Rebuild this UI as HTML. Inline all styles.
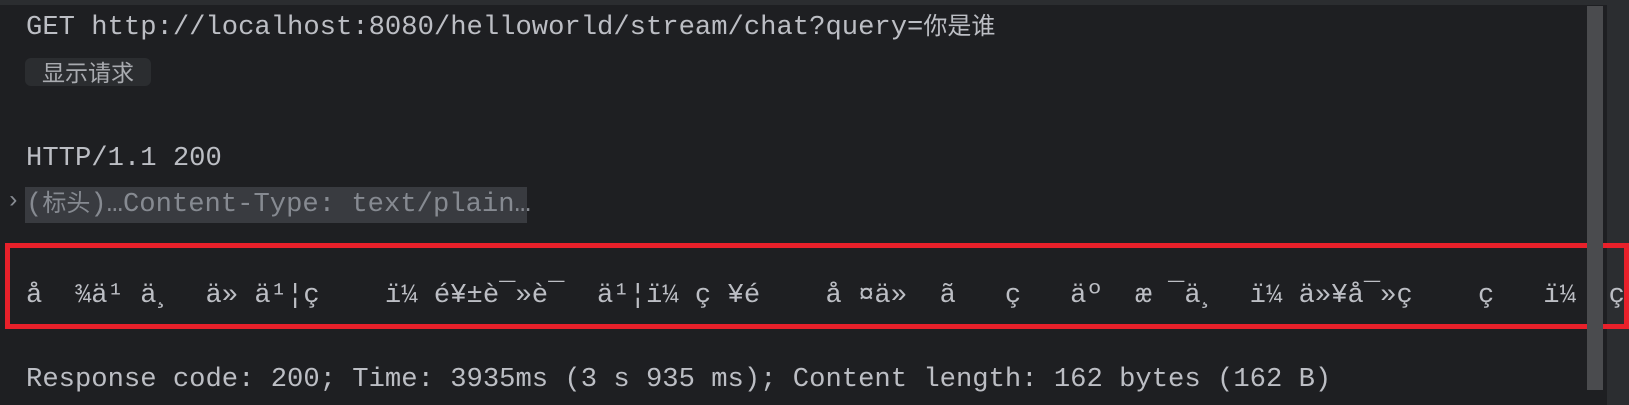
<!DOCTYPE html>
<html><head><meta charset="utf-8"><style>
html,body{margin:0;padding:0}
body{width:1629px;height:405px;background:#1e1f22;position:relative;overflow:hidden;font-family:"Liberation Mono","Noto Sans CJK SC",monospace;font-size:27.2px;color:#bcbec4}
.l{position:absolute;left:26px;white-space:pre;line-height:30px}
.top{position:absolute;left:0;top:0;width:1629px;height:5px;background:#2b2d30}
.btn{position:absolute;left:25px;top:58px;width:126px;height:28px;background:#2b2d30;border-radius:6px;font-family:"Noto Sans CJK SC",sans-serif;font-size:23px;color:#a9abb0;line-height:27px;text-align:center}
.hdr{position:absolute;left:25px;top:187px;width:502px;height:36px;background:#393b40}
.box{position:absolute;left:5px;top:243px;width:1614px;height:76px;border:5px solid #e8202a}
.thumb{position:absolute;left:1587px;top:6px;width:16px;height:384px;background:#4a4b4e}
.strip{position:absolute;left:1607px;top:5px;width:22px;height:400px;background:#2b2d30}
.c{font-size:24px}
</style></head><body>
<div class="top"></div>
<div class="strip"></div>
<div class="l" style="top:13px">GET http://localhost:8080/helloworld/stream/chat?query=<span class="c">你是谁</span></div>
<div class="btn">显示请求</div>
<div class="l" style="top:144px">HTTP/1.1 200</div>
<div class="hdr"></div>
<div class="l" style="top:190px;color:#868a91">(<span class="c">标头</span>)…Content-Type: text/plain…</div>
<div style="position:absolute;left:6px;top:188px;color:#868a91;font-size:24px">›</div>
<div class="box"></div>
<div class="l" style="top:281px;color:#bcbec4">å  ¾ä¹ ä¸  ä» ä¹¦ç    ï¼ é¥±è¯»è¯  ä¹¦ï¼ ç ¥é    å ¤ä»  ã   ç   äº  æ ¯ä¸  ï¼ ä»¥å¯»ç    ç   ï¼  ç</div>
<div class="thumb"></div>
<div class="l" style="top:365px">Response code: 200; Time: 3935ms (3 s 935 ms); Content length: 162 bytes (162 B)</div>
</body></html>
